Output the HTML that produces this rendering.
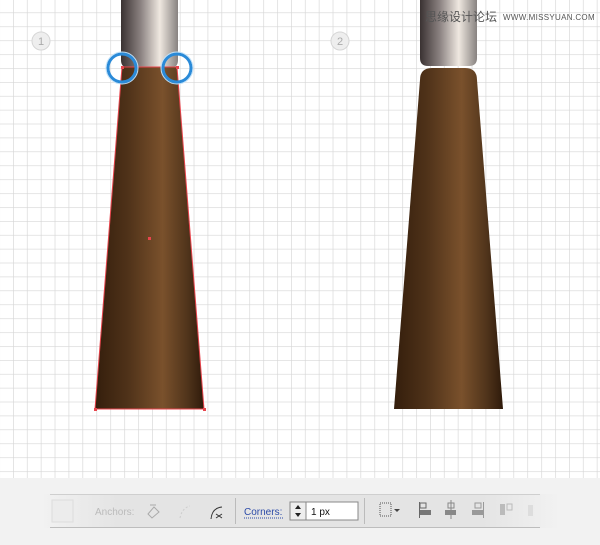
<!DOCTYPE html>
<html><head><style>
body{margin:0;width:600px;height:545px;overflow:hidden;background:#fff;font-family:"Liberation Sans",sans-serif}
</style></head><body>
<svg width="600" height="545" style="position:absolute;left:0;top:0">
<defs>
<pattern id="g" x="13" y="12.5" width="13.9" height="13.9" patternUnits="userSpaceOnUse">
<path d="M0 0H13.9M0 0V13.9" stroke="#d6d6d6" stroke-width="1.3" fill="none"/>
</pattern>
<linearGradient id="br" x1="0" x2="1">
<stop offset="0" stop-color="#341e0c"/><stop offset="0.3" stop-color="#4f3219"/><stop offset="0.62" stop-color="#7a512c"/><stop offset="0.85" stop-color="#50341b"/><stop offset="1" stop-color="#2e1a0a"/>
</linearGradient>
<linearGradient id="hd" x1="0" x2="1">
<stop offset="0" stop-color="#3a3232"/><stop offset="0.35" stop-color="#8c8382"/><stop offset="0.68" stop-color="#efe8e0"/><stop offset="1" stop-color="#878280"/>
</linearGradient>
<linearGradient id="tb" x1="0" x2="1">
<stop offset="0" stop-color="#f2f2f2"/><stop offset="0.15" stop-color="#e4e4e4"/><stop offset="0.85" stop-color="#e4e4e4"/><stop offset="1" stop-color="#f2f2f2"/>
</linearGradient>
</defs>
<rect width="600" height="478" fill="url(#g)"/>
<path d="M121 0H178V60Q178 68 170 68H129Q121 68 121 60Z" fill="url(#hd)"/>
<path d="M122 67H177L204 409H95Z" fill="url(#br)" stroke="#e8454d" stroke-width="1"/>
<rect x="94" y="408" width="3" height="3" fill="#e8454d"/><rect x="203" y="408" width="3" height="3" fill="#e8454d"/>
<rect x="121" y="66" width="3" height="3" fill="#e8454d"/><rect x="176" y="66" width="3" height="3" fill="#e8454d"/>
<rect x="148" y="237" width="3" height="3" fill="#e8454d"/>
<circle cx="122" cy="68" r="14" fill="none" stroke="#2a8ad8" stroke-width="3"/>
<circle cx="122" cy="68" r="16" fill="none" stroke="#bfe0f8" stroke-width="1"/>
<circle cx="177" cy="68" r="14" fill="none" stroke="#2a8ad8" stroke-width="3"/>
<circle cx="177" cy="68" r="16" fill="none" stroke="#bfe0f8" stroke-width="1"/>
<path d="M420 0H477V58Q477 66 469 66H428Q420 66 420 58Z" fill="url(#hd)"/>
<path d="M432 68H465Q477 68 477 80L503 409H394L420 80Q420 68 432 68Z" fill="url(#br)"/>
<circle cx="41" cy="41" r="9" fill="#eee" stroke="#d6d6d6"/><text x="41" y="45" font-size="11" fill="#aaa" text-anchor="middle">1</text>
<circle cx="340" cy="41" r="9" fill="#eee" stroke="#d6d6d6"/><text x="340" y="45" font-size="11" fill="#aaa" text-anchor="middle">2</text>
<text x="425" y="21" font-size="12" fill="#555" font-family="Noto Sans CJK SC,sans-serif">思缘设计论坛</text>
<text x="503" y="20" font-size="8" fill="#555" letter-spacing="0.3">WWW.MISSYUAN.COM</text>
<rect y="478" width="600" height="67" fill="#f2f2f2"/>
<rect x="40" y="494" width="520" height="34" fill="url(#tb)"/>
<line x1="50" y1="494.5" x2="540" y2="494.5" stroke="#cfcfcf"/>
<line x1="50" y1="527.5" x2="540" y2="527.5" stroke="#bdbdbd"/>
<rect x="52" y="500" width="21" height="22" fill="#ececec" stroke="#ddd"/>
<text x="95" y="515" font-size="10" fill="#bbb">Anchors:</text>
<path d="M148 514l6-7 5 5-7 6zM150 505h6" stroke="#aaa" fill="none"/>
<path d="M180 518q2-10 10-12" stroke="#ccc" stroke-dasharray="2 2" fill="none"/>
<path d="M211 519q1-11 11-12M216 514l6 4M216 518l6-4" stroke="#333" fill="none"/>
<line x1="235.5" y1="498" x2="235.5" y2="524" stroke="#bbb"/>
<text x="244" y="515" font-size="10" fill="#2b4aa8">Corners:</text>
<line x1="244" y1="518" x2="283" y2="518" stroke="#2b4aa8" stroke-dasharray="1 1"/>
<rect x="290" y="502" width="68" height="18" fill="#fff" stroke="#888"/>
<rect x="290" y="502" width="16" height="18" fill="#eee" stroke="#888"/>
<path d="M295 509l3-4 3 4zM295 513l3 4 3-4z" fill="#222"/>
<text x="311" y="515" font-size="10" fill="#111">1 px</text>
<line x1="364.5" y1="498" x2="364.5" y2="524" stroke="#bbb"/>
<rect x="380" y="503" width="11" height="13" fill="none" stroke="#555" stroke-dasharray="1 1"/>
<path d="M394 509h6l-3 3z" fill="#444"/>
<rect x="420" y="503" width="6" height="5" fill="none" stroke="#666"/><rect x="420" y="510" width="11" height="5" fill="#777"/><line x1="419.5" y1="502" x2="419.5" y2="518" stroke="#666"/>
<rect x="448" y="503" width="6" height="5" fill="none" stroke="#888"/><rect x="445" y="510" width="11" height="5" fill="#888"/><line x1="451" y1="500" x2="451" y2="519" stroke="#888"/>
<rect x="475" y="503" width="6" height="5" fill="none" stroke="#999"/><rect x="472" y="510" width="11" height="5" fill="#999"/><line x1="483.5" y1="502" x2="483.5" y2="518" stroke="#999"/>
<rect x="500" y="504" width="5" height="11" fill="#bbb"/><rect x="507" y="504" width="5" height="6" fill="none" stroke="#bbb"/>
<rect x="528" y="505" width="5" height="11" fill="#ddd"/>
</svg>
</body></html>
